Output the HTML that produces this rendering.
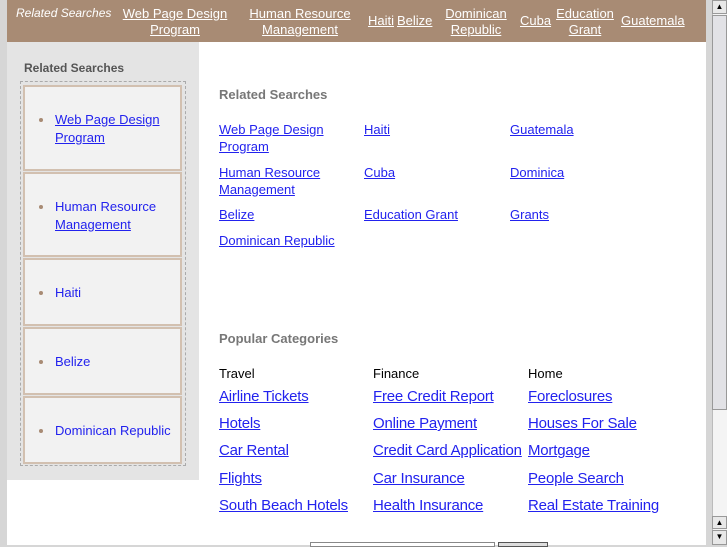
<!DOCTYPE html>
<html><head><style>
*{margin:0;padding:0;box-sizing:border-box}
body{width:727px;height:545px;overflow:hidden;background:#d6d6d6;font-family:"Liberation Sans",sans-serif;position:relative}
a{color:#2222ee;text-decoration:underline}
.p{position:absolute}
#hdr{left:7px;top:0;width:699px;height:42px;background:#a88b74}
#hdr span,#hdr a{position:absolute;color:#fff;font-size:13px;text-align:center;line-height:16px}
#main{left:7px;top:42px;width:699px;height:503px;background:#fff}
#side{left:7px;top:42px;width:192px;height:438px;background:#e4e4e4}
.box{position:absolute;left:23px;width:159px;background:#f2f2f2;border:2px solid #d2c0b0;font-size:13px;line-height:18px}
.box li{position:absolute;left:30px;color:#a88b74;list-style:none}
.box li:before{content:"";position:absolute;left:-16px;top:7px;width:4px;height:4px;border-radius:2px;background:#a88b74}
.l{position:absolute;font-size:13px;line-height:17px}
.c{position:absolute;font-size:15px;letter-spacing:-0.2px}
h3{position:absolute;font-size:13px;color:#777;font-weight:bold}
</style></head><body>
<div class="p" id="main"></div>
<div class="p" id="hdr">
<span style="left:9px;top:5px;font-style:italic;font-size:12px">Related Searches</span>
<a style="left:115px;top:6px;width:106px">Web Page Design Program</a>
<a style="left:240px;top:6px;width:106px">Human Resource Management</a>
<a style="left:361px;top:13px">Haiti</a>
<a style="left:390px;top:13px">Belize</a>
<a style="left:437px;top:6px;width:64px">Dominican Republic</a>
<a style="left:513px;top:13px">Cuba</a>
<a style="left:548px;top:6px;width:60px">Education Grant</a>
<a style="left:614px;top:13px">Guatemala</a>
</div>
<div class="p" id="side"></div>
<h3 style="left:24px;top:61px;color:#555;font-size:12px">Related Searches</h3>
<div class="p" style="left:20px;top:81px;width:166px;height:385px;border:1px dashed #aaa"></div>
<div class="box" style="top:85px;height:86px"><li style="top:24px;width:120px"><a>Web Page Design Program</a></li></div>
<div class="box" style="top:172px;height:85px"><li style="top:24px;width:120px"><a style="text-decoration:none">Human Resource </a><a>Management</a></li></div>
<div class="box" style="top:258px;height:68px"><li style="top:24px"><a style="text-decoration:none">Haiti</a></li></div>
<div class="box" style="top:327px;height:68px"><li style="top:24px"><a style="text-decoration:none">Belize</a></li></div>
<div class="box" style="top:396px;height:68px"><li style="top:24px"><a style="text-decoration:none">Dominican Republic</a></li></div>
<h3 style="left:219px;top:87px">Related Searches</h3>
<a class="l" style="left:219px;top:121px;width:120px">Web Page Design Program</a>
<a class="l" style="left:219px;top:164px;width:120px">Human Resource Management</a>
<a class="l" style="left:219px;top:206px">Belize</a>
<a class="l" style="left:219px;top:232px">Dominican Republic</a>
<a class="l" style="left:364px;top:121px">Haiti</a>
<a class="l" style="left:364px;top:164px">Cuba</a>
<a class="l" style="left:364px;top:206px">Education Grant</a>
<a class="l" style="left:510px;top:121px">Guatemala</a>
<a class="l" style="left:510px;top:164px">Dominica</a>
<a class="l" style="left:510px;top:206px">Grants</a>
<h3 style="left:219px;top:331px">Popular Categories</h3>
<div class="p" style="left:219px;top:366px;font-size:13px">Travel</div>
<div class="p" style="left:373px;top:366px;font-size:13px">Finance</div>
<div class="p" style="left:528px;top:366px;font-size:13px">Home</div>
<a class="c" style="left:219px;top:388px">Airline Tickets</a>
<a class="c" style="left:219px;top:415px">Hotels</a>
<a class="c" style="left:219px;top:442px">Car Rental</a>
<a class="c" style="left:219px;top:470px">Flights</a>
<a class="c" style="left:219px;top:497px">South Beach Hotels</a>
<a class="c" style="left:373px;top:388px">Free Credit Report</a>
<a class="c" style="left:373px;top:415px">Online Payment</a>
<a class="c" style="left:373px;top:442px">Credit Card Application</a>
<a class="c" style="left:373px;top:470px">Car Insurance</a>
<a class="c" style="left:373px;top:497px">Health Insurance</a>
<a class="c" style="left:528px;top:388px">Foreclosures</a>
<a class="c" style="left:528px;top:415px">Houses For Sale</a>
<a class="c" style="left:528px;top:442px">Mortgage</a>
<a class="c" style="left:528px;top:470px">People Search</a>
<a class="c" style="left:528px;top:497px">Real Estate Training</a>
<div class="p" style="left:310px;top:542px;width:185px;height:5px;border:1px solid #888;background:#fff"></div>
<div class="p" style="left:498px;top:542px;width:50px;height:5px;border:1px solid #555;background:#ddd"></div>
<div class="p" style="left:712px;top:0;width:15px;height:545px;background:#f4f4f4;border-left:1px solid #bbb"></div>
<div class="p" style="left:712px;top:0;width:15px;height:14px;background:#e8e8e8;border:1px solid #999;font-size:8px;text-align:center;line-height:12px">▲</div>
<div class="p" style="left:712px;top:15px;width:15px;height:395px;background:#e2e2e6;border:1px solid #999"></div>
<div class="p" style="left:712px;top:516px;width:15px;height:13px;background:#e8e8e8;border:1px solid #999;font-size:8px;text-align:center;line-height:11px">▲</div>
<div class="p" style="left:712px;top:530px;width:15px;height:15px;background:#e8e8e8;border:1px solid #999;font-size:8px;text-align:center;line-height:12px">▼</div>
</body></html>
